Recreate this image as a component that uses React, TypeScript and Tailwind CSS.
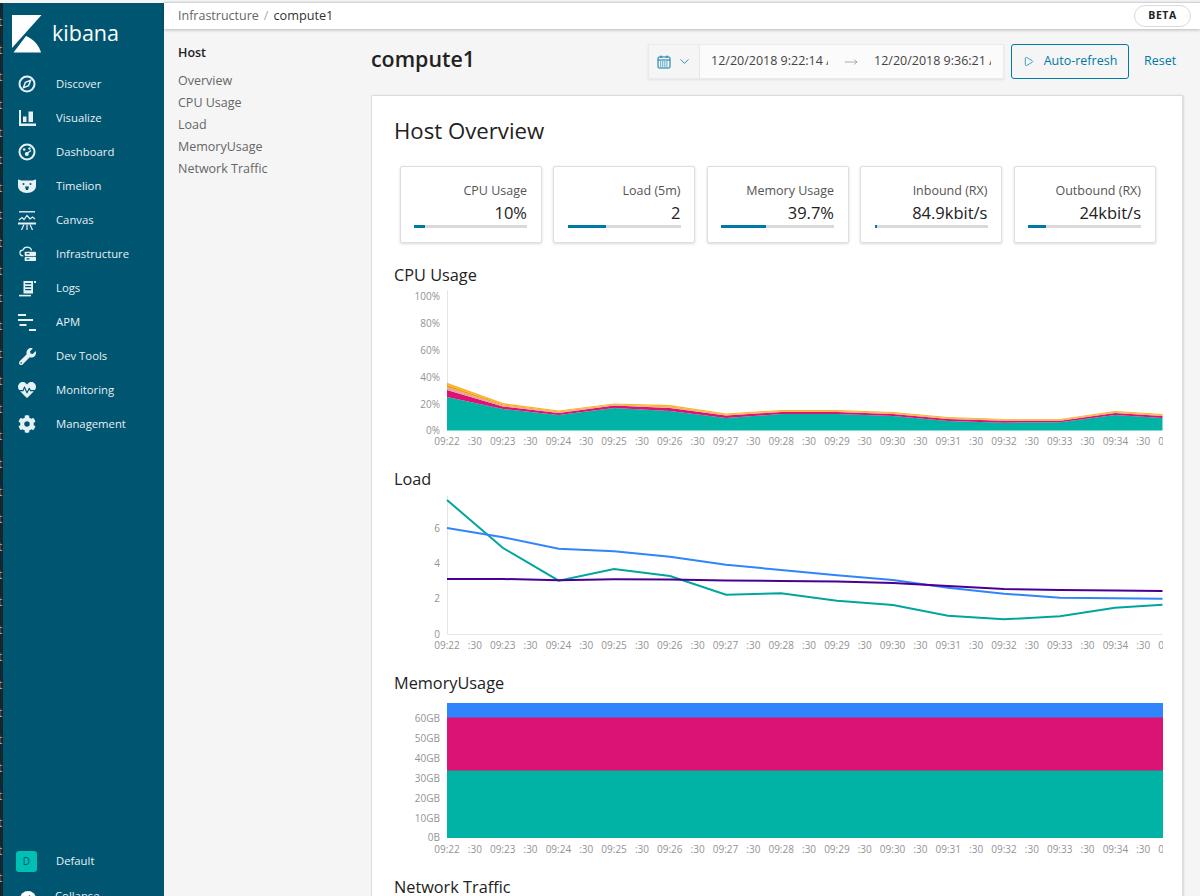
import { ChevronDown, ChevronLeft, Play, MoveRight } from "lucide-react";
import { FaCog, FaWrench, FaHeartbeat } from "react-icons/fa";
import type { ReactNode } from "react";

const X = [447, 503, 558.7, 614, 670, 726, 781, 837, 893, 948, 1004, 1060, 1115, 1162.5];

const line = (ys: number[]) => ys.map((y, i) => `${X[i]},${y}`).join(" ");
const band = (top: number[], bottom: number[]) =>
  line(top) + " " + bottom.map((y, i) => `${X[bottom.length - 1 - i]},${bottom[bottom.length - 1 - i]}`).join(" ");

const ticks = Array.from({ length: 28 }, (_, i) => ({
  x: 447 + i * 27.85,
  label: i % 2 ? ":30" : `09:${22 + i / 2}`,
}));

const cpuTeal = [397, 409, 415, 408, 411, 418, 414, 414, 416, 421, 422.7, 422.3, 415, 418];
const cpuPink = [390, 406.500, 413, 405.500, 408, 415.500, 412, 412, 414, 419, 420.800, 420.800, 413, 416];
const cpuPale = [387, 405.500, 412.300, 405, 407.200, 415, 411.500, 411.500, 413.500, 418.500, 420.300, 420.300, 412.500, 415.500];
const cpuOrange = [385, 404.500, 411.500, 404.500, 406.500, 414.500, 411, 411, 413, 418, 419.800, 419.800, 412, 415];
const cpuYellow = [382.7, 403, 410.500, 403.500, 405, 413.500, 410, 410, 412, 417, 419, 419, 411, 414];
const bottom = X.map(() => 430.5);

const loadTeal = [500, 548, 580.7, 569, 576, 594.7, 593.3, 600.7, 605, 615.7, 619.3, 616.3, 607.7, 604.7];
const loadBlue = [528, 537.3, 548.7, 551.3, 556.7, 564.7, 570, 575.3, 580, 587.7, 593.7, 597.7, 598.3, 598.7];
const loadPurple = [579, 579, 580.3, 579.3, 579.5, 580.5, 581, 581.5, 583, 586, 589, 590, 590.5, 591];

const nav: { label: string; icon: ReactNode }[] = [
  {
    label: "Discover",
    icon: (
      <svg viewBox="0 0 18 18" className="h-[18px] w-[18px]" fill="none" stroke="currentColor">
        <circle cx="9" cy="9" r="7.500" strokeWidth="2" />
        <path d="M12.600 5.400 10.600 10.600 5.400 12.600 7.400 7.400Z" strokeWidth="1.500" />
      </svg>
    ),
  },
  {
    label: "Visualize",
    icon: (
      <svg viewBox="0 0 18 18" className="h-[18px] w-[18px]" fill="currentColor">
        <path d="M1 1h2v13.500h15V17H1Z" />
        <path d="M5 7.500h3.500V13H5ZM10.500 2.500H15V13h-4.500Z" />
      </svg>
    ),
  },
  {
    label: "Dashboard",
    icon: (
      <svg viewBox="0 0 18 18" className="h-[18px] w-[18px]" fill="none" stroke="currentColor">
        <circle cx="9" cy="9" r="7.500" strokeWidth="2" />
        <circle cx="6.200" cy="6.500" r="1.300" fill="currentColor" stroke="none" />
        <circle cx="11.500" cy="5.500" r="1.200" fill="currentColor" stroke="none" />
        <path d="M13 7.500 9.500 10" strokeWidth="1.500" />
        <circle cx="8.800" cy="11" r="2" fill="currentColor" stroke="none" />
      </svg>
    ),
  },
  {
    label: "Timelion",
    icon: (
      <svg viewBox="0 0 18 14" className="h-[14px] w-[18px]">
        <path d="M0 .5c2 .5 3 1 4.500 1h9c1.500 0 2.500-.5 4.500-1V7c0 4-4 7-9 7s-9-3-9-7Z" fill="currentColor" />
        <circle cx="5.500" cy="5" r="1" fill="#005571" />
        <circle cx="12.500" cy="5" r="1" fill="#005571" />
        <path d="M7 7.500h4L10 11H8Z" fill="#005571" />
      </svg>
    ),
  },
  {
    label: "Canvas",
    icon: (
      <svg viewBox="0 0 18 19" className="h-[19px] w-[18px]" fill="none" stroke="currentColor">
        <path d="M1 .8h16" strokeWidth="1.400" />
        <path d="M1 9 4 6.500 6 8.500 9 4.500 12 8 14.500 6 17 8" strokeWidth="1.200" />
        <path d="M0 12.500h18" strokeWidth="2" />
        <path d="M6 13.500 3.500 19M9 13.500V19M12 13.500 14.500 19" strokeWidth="1.200" />
      </svg>
    ),
  },
  {
    label: "Infrastructure",
    icon: (
      <svg viewBox="0 0 18 16" className="h-[16px] w-[17px]">
        <path d="M4.500 10C2 10 1 8.500 1 6.800S2.500 4 4 4c.800-2 2.500-3.200 4.500-3.200 2.500 0 4.300 1.500 4.800 3.500" fill="none" stroke="currentColor" strokeWidth="1.300" />
        <rect x="6" y="5.500" width="12" height="4.500" rx="1" fill="currentColor" />
        <rect x="6" y="11" width="12" height="4.500" rx="1" fill="currentColor" />
        <rect x="8" y="7" width="3" height="1.300" fill="#005571" />
        <rect x="8" y="12.500" width="3" height="1.300" fill="#005571" />
      </svg>
    ),
  },
  {
    label: "Logs",
    icon: (
      <svg viewBox="0 0 17 17" className="h-[17px] w-[17px]" fill="currentColor">
        <path d="M4.500 1H14v12.500H4.500ZM6.200 3v1.300h6V3ZM6.200 6v1.300h6V6ZM6.200 9v1.300h6V9Z" fillRule="evenodd" />
        <rect x="15" y="1" width="2" height="2" />
        <rect x="0" y="14.800" width="12" height="1.600" />
      </svg>
    ),
  },
  {
    label: "APM",
    icon: (
      <svg viewBox="0 0 18 17" className="h-[17px] w-[18px]" fill="currentColor">
        <rect x="0" y="0" width="8" height="2" />
        <rect x="0" y="5" width="15" height="2" />
        <rect x="1.500" y="10" width="7" height="2" />
        <rect x="11" y="15" width="7" height="2" />
      </svg>
    ),
  },
  { label: "Dev Tools", icon: <FaWrench className="h-[17px] w-[17px]" /> },
  { label: "Monitoring", icon: <FaHeartbeat className="h-[18px] w-[18px]" /> },
  { label: "Management", icon: <FaCog className="h-[18px] w-[18px]" /> },
];

const metrics = [
  { label: "CPU Usage", value: "10%", width: 11 },
  { label: "Load (5m)", value: "2", width: 38 },
  { label: "Memory Usage", value: "39.7%", width: 45 },
  { label: "Inbound (RX)", value: "84.9kbit/s", width: 2 },
  { label: "Outbound (RX)", value: "24kbit/s", width: 18 },
];

function XAxis({ y }: { y: number }) {
  return (
    <>
      {ticks.map((t) => (
        <text key={t.x} x={t.x} y={y} textAnchor="middle" className="fill-[#939393] text-[10px]">
          {t.label}
        </text>
      ))}
    </>
  );
}

function YLabel({ y, children }: { y: number; children: string }) {
  return (
    <text x={440} y={y} textAnchor="end" className="fill-[#939393] text-[10px]">
      {children}
    </text>
  );
}

function Section({ title, children }: { title: string; children: ReactNode }) {
  return (
    <section>
      <h3 className="h-[22px] text-[16.300px] leading-[22px] font-medium text-[#222]">{title}</h3>
      {children}
    </section>
  );
}

function CalendarDots() {
  return (
    <svg viewBox="0 0 14 14" className="h-[14px] w-[14px]" fill="none" stroke="currentColor">
      <rect x="1" y="2" width="12" height="11" rx="1" />
      <path d="M1 5h12M4 .5v2.500M10 .5v2.500" />
      <path d="M3 7h8M3 9h8M3 11h8" strokeDasharray="1.200 .9" strokeWidth="1" />
    </svg>
  );
}

export default function App() {
  return (
    <div className="flex h-[896px] overflow-hidden bg-[#f5f5f5] font-['Open_Sans',sans-serif]">
      <div className="mt-[3px] flex w-[3px] shrink-0 flex-col overflow-hidden bg-[#14262e] pt-[9px]">
        {Array.from({ length: 32 }, (_, i) => (
          <span key={i} className="-ml-[2px] h-[28.300px] text-[12px] leading-[20px] text-[#aaa]">
            t
          </span>
        ))}
      </div>

      <aside className="mt-[3px] h-[893px] w-[161px] shrink-0 overflow-hidden bg-[#005571] text-[#e6f1f5]">
        <div className="flex h-[64px] items-center gap-[10px] pb-[3px] pl-[9px] text-white">
          <svg viewBox="0 0 30 38" className="h-[38px] w-[30px]" fill="#fff">
            <path d="M0 0h29.500L0 33Z" />
            <path d="M14 21C21 24 27 30 29 37.500H1.500Z" />
          </svg>
          <span className="pb-[2px] text-[21.500px] leading-none font-medium">kibana</span>
        </div>
        <nav>
          {nav.map((item) => (
            <a key={item.label} className="flex h-[34px] items-center text-[11.300px]">
              <span className="ml-[15px] flex w-[18px] justify-center">{item.icon}</span>
              <span className="ml-[20px]">{item.label}</span>
            </a>
          ))}
        </nav>
        <div className="mt-[404px] flex h-[32px] items-center text-[11.300px]">
          <span className="ml-[13px] flex h-[21px] w-[21px] items-center justify-center rounded-[3px] bg-[#00bfb3] text-[10px] text-[#005571]">
            D
          </span>
          <span className="ml-[19px]">Default</span>
        </div>
        <div className="mt-[2px] flex h-[32px] items-center text-[11.300px]">
          <span className="mt-[8px] ml-[17px] flex h-[16px] w-[16px] items-center justify-center rounded-full bg-white text-[#005571]">
            <ChevronLeft className="h-[12px] w-[12px]" strokeWidth={3} />
          </span>
          <span className="mt-[2px] ml-[19px]">Collapse</span>
        </div>
      </aside>

      <div className="min-w-0 flex-1">
        <header className="mt-[2px] flex h-[27px] items-center justify-between border-t border-[#d3d3d3] bg-white pr-[9px] pl-[14px] shadow-[0_1px_3px_rgba(0,0,0,0.25)]">
          <div className="flex items-center text-[12.500px] text-[#666]">
            <span>Infrastructure</span>
            <span className="mx-[5px] text-[#aaa]">/</span>
            <span className="text-[12.700px] font-medium text-[#333]">compute1</span>
          </div>
          <span className="flex h-[22px] w-[57px] items-center justify-center rounded-full border border-[#d9d9d9] text-[10.500px] font-bold tracking-[0.5px] text-[#222]">
            BETA
          </span>
        </header>

        <div className="flex">
          <nav className="w-[207px] shrink-0 pt-[13px] pl-[14px] text-[12.500px] text-[#666]">
            <div className="mb-[6px] h-[22px] text-[12.500px] leading-[22px] font-semibold text-[#222]">Host</div>
            {["Overview", "CPU Usage", "Load", "MemoryUsage", "Network Traffic"].map((s) => (
              <div key={s} className="h-[22px] leading-[22px]">
                {s}
              </div>
            ))}
          </nav>

          <main className="min-w-0 flex-1 pt-[15px] pr-[17px]">
            <div className="flex h-[35px] items-center">
              <h1 className="flex-1 pb-[5px] text-[21.400px] font-semibold text-[#222]">compute1</h1>
              <div className="flex h-[35px] w-[356px] items-center border border-[#eaeaea] bg-[#fbfbfb] text-[12.500px] text-[#444] shadow-[0_1px_2px_rgba(0,0,0,0.08)]">
                <span className="flex h-full w-[51px] shrink-0 items-center justify-center gap-[6px] border-r border-[#e6e6e6] bg-[#f5f5f5] text-[#0079a5]">
                  <CalendarDots />
                  <ChevronDown className="h-[15px] w-[15px]" strokeWidth={1.300} />
                </span>
                <span className="ml-[11px] w-[117px] shrink-0 overflow-hidden whitespace-nowrap">12/20/2018 9:22:14 AM</span>
                <span className="flex w-[46px] shrink-0 justify-center text-[#777]">
                  <MoveRight className="h-[14px] w-[14px]" strokeWidth={1} />
                </span>
                <span className="w-[117px] shrink-0 overflow-hidden whitespace-nowrap">12/20/2018 9:36:21 AM</span>
              </div>
              <button className="ml-[7px] flex h-[35px] w-[118px] items-center justify-center gap-[10px] rounded-[3px] border border-[#0079a5] text-[12.500px] text-[#0079a5]">
                <Play className="h-[11px] w-[11px]" strokeWidth={1.500} />
                Auto-refresh
              </button>
              <a className="ml-[15px] w-[39px] text-[12.500px] text-[#0079a5]">Reset</a>
            </div>

            <div className="mt-[16px] h-[900px] rounded-[2px] border border-[#dcdcdc] bg-white pt-[20px] pr-[20px] pl-[22px] shadow-[1px_0_2px_rgba(0,0,0,0.12)]">
              <h2 className="h-[30px] text-[22.200px] leading-[30px] font-medium text-[#222]">Host Overview</h2>
              <div className="mt-[20px] ml-[5.500px] grid w-[756px] grid-cols-5 gap-[11.500px]">
                {metrics.map((m) => (
                  <div key={m.label} className="h-[77px] rounded-[2px] border border-[#dedede] bg-white px-[13.500px] pt-[15px] text-right shadow-[0_1px_3px_rgba(0,0,0,0.15)]">
                    <div className="h-[18px] text-[12.500px] leading-[18px] text-[#555]">{m.label}</div>
                    <div className="h-[25px] text-[16.500px] leading-[25px] font-medium text-[#222]">{m.value}</div>
                    <div className="h-[3px] bg-[#d9d9d9]">
                      <div className="h-full bg-[#0079a5]" style={{ width: m.width }} />
                    </div>
                  </div>
                ))}
              </div>

              <div className="mt-[21px]">
                <Section title="CPU Usage">
                  <svg viewBox="394 286 769 182" className="block h-[182px] w-[769px]">
                    <path d="M447.500 290V431" stroke="#e6e6e6" strokeWidth="1" />
                    {[["100%", 300], ["80%", 327], ["60%", 354], ["40%", 380.500], ["20%", 407.500], ["0%", 434]].map(([l, y]) => (
                      <YLabel key={l} y={y as number}>{l as string}</YLabel>
                    ))}
                    <polygon points={band(cpuTeal, bottom)} fill="#00b3a4" />
                    <polygon points={band(cpuPink, cpuTeal)} fill="#db1374" />
                    <polygon points={band(cpuPale, cpuPink)} fill="#e9a39a" />
                    <polygon points={band(cpuOrange, cpuPale)} fill="#f29a0a" />
                    <polygon points={band(cpuYellow, cpuOrange)} fill="#f7b42c" />
                    <XAxis y={445} />
                  </svg>
                </Section>
                <Section title="Load">
                  <svg viewBox="394 490 769 182" className="block h-[182px] w-[769px]">
                    <path d="M447.500 496V634.500H1162.500" fill="none" stroke="#e6e6e6" strokeWidth="1" />
                    {[["6", 532], ["4", 567], ["2", 602], ["0", 637.500]].map(([l, y]) => (
                      <YLabel key={l} y={y as number}>{l as string}</YLabel>
                    ))}
                    <polyline points={line(loadTeal)} fill="none" stroke="#00a69b" strokeWidth="2" />
                    <polyline points={line(loadBlue)} fill="none" stroke="#3185fc" strokeWidth="2" />
                    <polyline points={line(loadPurple)} fill="none" stroke="#490092" strokeWidth="2" />
                    <XAxis y={649} />
                  </svg>
                </Section>
                <Section title="MemoryUsage">
                  <svg viewBox="394 694 769 182" className="block h-[182px] w-[769px]">
                    <rect x="447" y="703" width="716" height="15" fill="#3185fc" />
                    <rect x="447" y="717.500" width="716" height="53.500" fill="#db1374" />
                    <rect x="447" y="770.500" width="716" height="67.500" fill="#00b3a4" />
                    {[["60GB", 722], ["50GB", 742], ["40GB", 762], ["30GB", 782], ["20GB", 802], ["10GB", 822], ["0B", 841]].map(([l, y]) => (
                      <YLabel key={l} y={y as number}>{l as string}</YLabel>
                    ))}
                    <XAxis y={853} />
                  </svg>
                </Section>
                <Section title="Network Traffic">
                  <div className="h-[40px]" />
                </Section>
              </div>
            </div>
          </main>
        </div>
      </div>
    </div>
  );
}
